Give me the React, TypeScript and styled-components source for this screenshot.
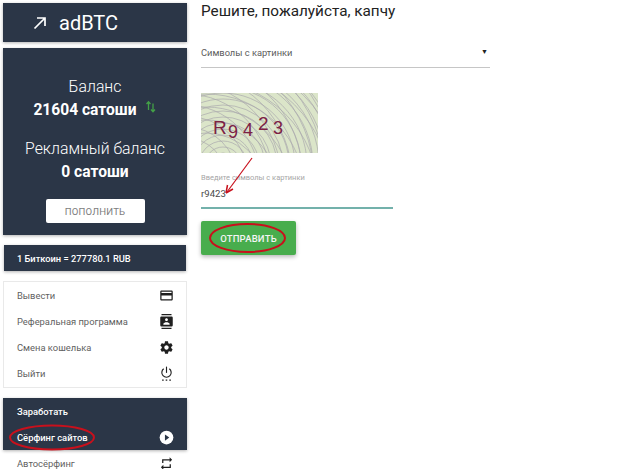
import React from "react";
import styled, { createGlobalStyle } from "styled-components";

const Global = createGlobalStyle`
  html, body { margin: 0; padding: 0; background: #fff; height: 469px; overflow: hidden; }
  body { font-family: Roboto, "Liberation Sans", sans-serif; }
  * { box-sizing: border-box; }
`;

const Page = styled.div`
  display: flex;
  align-items: flex-start;
  height: 469px;
  overflow: hidden;
  padding: 3px 0 0 3px;
`;
const Sidebar = styled.aside`
  width: 184px;
  flex: none;
  display: flex;
  flex-direction: column;
`;
const Dark = styled.div`
  background: #2b3647;
  color: #fff;
  box-shadow: 0 1px 3px rgba(0, 0, 0, 0.3);
`;
const Logo = styled(Dark)`
  height: 39px;
  display: flex;
  align-items: center;
  padding-left: 29px;
  gap: 11px;
  font-size: 20px;
  margin-bottom: 6px;
`;
const Balance = styled(Dark)`
  height: 187px;
  display: flex;
  flex-direction: column;
  align-items: center;
  padding-top: 29px;
  margin-bottom: 10px;
`;
const BalanceLabel = styled.div<{ $gap?: number }>`
  font-size: 15.8px;
  font-weight: 300;
  line-height: 20px;
  margin-top: ${(p) => p.$gap ?? 0}px;
`;
const BalanceValue = styled.div`
  display: flex;
  align-items: flex-start;
  gap: 8px;
  font-size: 15.6px;
  font-weight: 700;
  line-height: 20px;
  margin-top: 3px;
`;
const TopUp = styled.button`
  margin-top: 17px;
  width: 99px;
  height: 24px;
  background: #fff;
  border: 0;
  border-radius: 2px;
  color: #7d7d7d;
  font: 400 9.6px Roboto, sans-serif;
  letter-spacing: 0.2px;
  text-transform: uppercase;
  padding: 0;
`;
const Rate = styled(Dark)`
  height: 26px;
  margin-left: 1px;
  margin-right: 1px;
  display: flex;
  align-items: center;
  padding-left: 13px;
  font-size: 9.3px;
  font-weight: 500;
  margin-bottom: 10px;
`;
const Menu = styled.nav`
  height: 107px;
  box-shadow: inset 0 0 0 1px #e9e9e9;
  padding: 1px 0 0;
  margin-bottom: 10px;
  display: flex;
  flex-direction: column;
`;
const Item = styled.div<{ $active?: boolean }>`
  height: 26px;
  flex: none;
  display: flex;
  align-items: center;
  justify-content: space-between;
  padding: 0 13px 0 14px;
  font-size: 9.4px;
  color: ${(p) => (p.$active ? "#fff" : "#5f5f5f")};
  font-weight: ${(p) => (p.$active ? 500 : 400)};
`;
const Earn = styled(Dark)`
  height: 52px;
`;
const EarnTitle = styled.div`
  height: 26px;
  display: flex;
  align-items: center;
  padding-left: 14px;
  font-size: 9.4px;
  font-weight: 500;
`;
const Main = styled.main`
  margin-left: 14px;
  width: 289px;
  flex: none;
`;
const Title = styled.h1`
  margin: 0;
  font-size: 15.3px;
  font-weight: 400;
  line-height: 19px;
  color: #222;
  margin-top: -3px;
  padding-top: 2px;
`;
const Select = styled.div`
  margin-top: 19px;
  height: 28px;
  display: flex;
  align-items: center;
  justify-content: space-between;
  border-bottom: 1px solid #c6c6c6;
  padding: 0 2px 3px 0;
  font-size: 9.3px;
  color: #5c5c5c;
`;
const Caret = styled.span`
  font-size: 7px;
  color: #222;
`;
const Captcha = styled.svg`
  display: block;
  margin-top: 25px;
`;
const Field = styled.div`
  width: 192px;
  margin-top: 20px;
  border-bottom: 2px solid #73b1ab;
  height: 36px;
`;
const FieldLabel = styled.div`
  font-size: 7.5px;
  line-height: 10px;
  color: #a6a6a6;
`;
const FieldValue = styled.div`
  font-size: 9.6px;
  line-height: 12px;
  margin-top: 5px;
  color: #4a4a4a;
`;
const Submit = styled.button`
  display: block;
  margin-top: 12px;
  width: 95px;
  height: 34px;
  border: 0;
  border-radius: 2px;
  background: #48ad4d;
  color: #f4f4f4;
  font: 500 9.5px Roboto, sans-serif;
  letter-spacing: 0.2px;
  box-shadow: 0 2px 4px rgba(0, 0, 0, 0.28);
  padding: 0;
`;
const Overlay = styled.svg`
  position: absolute;
  left: 0;
  top: 0;
  pointer-events: none;
`;

const Card = () => (
  <svg width="15" height="15" viewBox="0 0 24 24" fill="#1f1f1f"><path d="M20 4H4c-1.100 0-2 .9-2 2v12c0 1.100.9 2 2 2h16c1.100 0 2-.9 2-2V6c0-1.100-.9-2-2-2zm0 14H4v-6h16v6zm0-10H4V6h16v2z" /></svg>
);
const Contacts = () => (
  <svg width="15" height="15" viewBox="0 0 24 24" fill="#1f1f1f"><path d="M20 0H4v2h16V0zM4 24h16v-2H4v2zM20 4H4c-1.100 0-2 .9-2 2v12c0 1.100.9 2 2 2h16c1.100 0 2-.9 2-2V6c0-1.100-.9-2-2-2zm-8 2.750c1.240 0 2.250 1.010 2.250 2.250s-1.010 2.250-2.250 2.250S9.750 10.240 9.750 9 10.760 6.750 12 6.750zM17 17H7v-1.500c0-1.670 3.330-2.500 5-2.500s5 .83 5 2.500V17z" /></svg>
);
const Gear = () => (
  <svg width="15" height="15" viewBox="0 0 24 24" fill="#1f1f1f"><path d="M19.430 12.980c.04-.32.07-.64.07-.98s-.03-.66-.07-.98l2.110-1.650c.19-.15.24-.42.12-.64l-2-3.460c-.12-.22-.39-.3-.61-.22l-2.490 1c-.52-.4-1.080-.73-1.690-.98l-.38-2.650C14.460 2.180 14.250 2 14 2h-4c-.25 0-.46.18-.49.42l-.38 2.650c-.61.25-1.170.59-1.690.98l-2.490-1c-.23-.09-.49 0-.61.22l-2 3.460c-.13.220-.07.490.12.640l2.110 1.650c-.04.320-.07.650-.07.980s.03.660.07.980l-2.110 1.650c-.19.150-.24.420-.12.640l2 3.460c.12.220.39.300.61.220l2.490-1c.52.400 1.080.730 1.690.980l.38 2.650c.03.240.24.420.49.420h4c.25 0 .46-.18.49-.42l.38-2.650c.61-.25 1.170-.59 1.690-.98l2.490 1c.23.090.49 0 .61-.22l2-3.460c.12-.22.07-.49-.12-.64l-2.110-1.650zM12 15.500c-1.930 0-3.500-1.570-3.500-3.500s1.570-3.500 3.500-3.500 3.500 1.570 3.500 3.500-1.570 3.500-3.500 3.500z" /></svg>
);
const Power = () => (
  <svg width="15" height="15" viewBox="0 0 24 24" fill="none" stroke="#1f1f1f" strokeWidth="1.800"><path d="M12 1v10" /><path d="M7.500 4.500a7.500 7.500 0 1 0 9 0" /><path d="M5 22.500h2.500M10.700 22.500h2.500M16.500 22.500h2.500" strokeWidth="1.800" /></svg>
);
const Play = () => (
  <svg width="15" height="15" viewBox="0 0 24 24"><circle cx="12" cy="12" r="11" fill="#fff" /><path d="M9.500 7l7 5-7 5z" fill="#2b3647" /></svg>
);
const Repeat = () => (
  <svg width="15" height="15" viewBox="0 0 24 24" fill="#1f1f1f"><path d="M7 7h10v3l4-4-4-4v3H5v6h2V7zm10 10H7v-3l-4 4 4 4v-3h12v-6h-2v4z" /></svg>
);

const rings = (cx: number, cy: number, from: number, to: number, step: number) => {
  const out: React.ReactElement[] = [];
  for (let r = from; r < to; r += step) out.push(<circle key={`${cx}-${r}`} cx={cx} cy={cy} r={r} />);
  return out;
};

const CaptchaImage = () => (
  <Captcha width="117" height="60" viewBox="0 0 117 60">
    <rect width="117" height="60" fill="#dbe5c9" />
    <g fill="none" stroke="#aaa9ae" strokeWidth="0.700">
      {rings(22, 72, 6, 130, 6)}
      {rings(-15, 85, 40, 170, 11)}
      {rings(5, 100, 60, 170, 13)}
    </g>
    <g fill="#7c2144" fontFamily="'Liberation Sans', sans-serif">
      <text x="12" y="41" fontSize="19">R</text>
      <text x="27" y="45" fontSize="18">9</text>
      <text x="42" y="43" fontSize="18">4</text>
      <text x="57" y="37" fontSize="19">2</text>
      <text x="72" y="41" fontSize="18">3</text>
    </g>
  </Captcha>
);

export default function App() {
  return (
    <>
      <Global />
      <Page>
        <Sidebar>
          <Logo>
            <svg width="16" height="16" viewBox="0 0 16 16" fill="none" stroke="#fff" strokeWidth="1.700"><path d="M2.500 13.500L13 3M5 3h8v8" /></svg>
            <span>adBTC</span>
          </Logo>
          <Balance>
            <BalanceLabel>Баланс</BalanceLabel>
            <BalanceValue>
              21604 сатоши
              <svg width="12" height="14" viewBox="0 0 12 14" fill="none" stroke="#43a047" strokeWidth="1.300">
                <path d="M3.500 10V2M1.500 4l2-2.200L5.500 4M8 3.500v8M6 9.500l2 2.200 2-2.200" />
              </svg>
            </BalanceValue>
            <BalanceLabel $gap={19}>Рекламный баланс</BalanceLabel>
            <BalanceValue>0 сатоши</BalanceValue>
            <TopUp>Пополнить</TopUp>
          </Balance>
          <Rate>1 Биткоин = 277780.1 RUB</Rate>
          <Menu>
            <Item>Вывести<Card /></Item>
            <Item>Реферальная программа<Contacts /></Item>
            <Item>Смена кошелька<Gear /></Item>
            <Item>Выйти<Power /></Item>
          </Menu>
          <Earn>
            <EarnTitle>Заработать</EarnTitle>
            <Item $active>Сёрфинг сайтов<Play /></Item>
          </Earn>
          <Item>Автосёрфинг<Repeat /></Item>
        </Sidebar>
        <Main>
          <Title>Решите, пожалуйста, капчу</Title>
          <Select>Символы с картинки<Caret>▼</Caret></Select>
          <CaptchaImage />
          <Field>
            <FieldLabel>Введите символы с картинки</FieldLabel>
            <FieldValue>r9423</FieldValue>
          </Field>
          <Submit>ОТПРАВИТЬ</Submit>
        </Main>
      </Page>
      <Overlay width="640" height="469" fill="none" stroke="#c8101c">
        <ellipse cx="52" cy="437.500" rx="42" ry="12" strokeWidth="2" />
        <ellipse cx="247.500" cy="238" rx="37.500" ry="14" strokeWidth="2" />
        <path d="M252 158L227 192" strokeWidth="1.200" />
        <path d="M226 193l1.500-8M226 193l7-4" strokeWidth="1.500" />
      </Overlay>
    </>
  );
}
